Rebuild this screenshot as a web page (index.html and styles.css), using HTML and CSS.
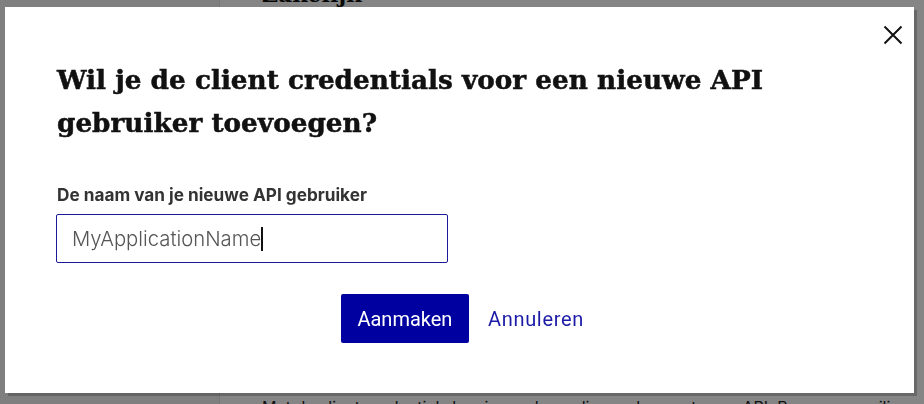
FILE: index.html
```html
<!DOCTYPE html>
<html lang="nl">
<head>
<meta charset="utf-8">
<title>API gebruiker toevoegen</title>
<link rel="stylesheet" href="styles.css">
</head>
<body>
<div class="page">
  <aside class="sidebar"></aside>
  <main class="main">
    <h2 class="bg-heading">Zakelijk</h2>
    <p class="bg-text">Met de client credentials kun je een koppeling maken met onze API. Bewaar ze veilig.</p>
  </main>
</div>
<div class="overlay">
  <div class="dialog" role="dialog" aria-labelledby="dlg-title">
    <button class="close" aria-label="Sluiten">
      <svg width="20" height="20" viewBox="0 0 20 20"><path d="M1.5 1.5 L18.5 18.5 M18.5 1.5 L1.5 18.5" stroke="#111" stroke-width="2" fill="none"/></svg>
    </button>
    <h1 id="dlg-title" class="title">Wil je de client credentials voor een nieuwe API gebruiker toevoegen?</h1>
    <label class="label" for="name">De naam van je nieuwe API gebruiker</label>
    <div class="field"><span class="value">MyApplicationName</span><span class="caret"></span></div>
    <div class="actions">
      <button class="primary">Aanmaken</button>
      <a class="link" href="#">Annuleren</a>
    </div>
  </div>
</div>
</body>
</html>
```
FILE: styles.css
```css
html, body {
  margin: 0;
  padding: 0;
  height: 100%;
  overflow: hidden;
}
body {
  font-family: "Liberation Sans", Arial, sans-serif;
  background: #ffffff;
}
.page {
  display: flex;
  height: 100%;
}
.sidebar {
  flex: 0 0 219px;
  background: #f4f4f4;
  border-right: 1px solid #e4e4e4;
}
.main {
  flex: 1;
  min-width: 0;
  overflow: hidden;
  padding-left: 42px;
  display: flex;
  flex-direction: column;
  justify-content: space-between;
}
.bg-heading {
  margin: -19px 0 0;
  font-family: "DejaVu Serif", serif;
  font-size: 22px;
  color: #111;
}
.bg-text {
  margin: 0 0 -13px;
  font-family: "Inter", sans-serif;
  font-size: 16px;
  line-height: 20px;
  color: #222;
  white-space: nowrap;
}
.overlay {
  position: fixed;
  inset: 0;
  background: rgba(0, 0, 0, 0.48);
  display: flex;
  padding: 7px 10px 11px 5px;
}
.dialog {
  position: relative;
  flex: 1;
  background: #fff;
  box-shadow: 3px 3px 0 rgba(0, 0, 0, 0.22);
  padding: 51px 52px 0 52px;
  display: flex;
  flex-direction: column;
  align-items: flex-start;
}
.close {
  position: absolute;
  top: 17px;
  right: 10px;
  width: 22px;
  height: 22px;
  padding: 0;
  border: 0;
  background: none;
  display: flex;
  align-items: center;
  justify-content: center;
}
.title {
  margin: 0;
  font-family: "DejaVu Serif", serif;
  font-weight: bold;
  font-size: 26.3px;
  line-height: 43px;
  color: #111;
  -webkit-text-stroke: 0.5px #111;
  max-width: 730px;
}
.label {
  margin-top: 41px;
  font-family: "Inter", sans-serif;
  font-weight: 700;
  font-size: 17.2px;
  line-height: 20px;
  color: #333;
}
.field {
  margin: 9px 0 0 -1px;
  box-sizing: border-box;
  width: 392px;
  height: 49px;
  border: 1px solid #1a1a9a;
  border-radius: 2px;
  padding: 0 15px;
  display: flex;
  align-items: center;
}
.value {
  font-family: "Inter", sans-serif;
  font-size: 20.3px;
  color: #555;
  font-weight: 300;
}
.caret {
  width: 2px;
  height: 24px;
  background: #111;
}
.actions {
  align-self: center;
  margin: 31px 0 0 6px;
  display: flex;
  align-items: center;
  gap: 19px;
}
.primary {
  width: 128px;
  height: 49px;
  border: 0;
  border-radius: 2px;
  background: #0000a0;
  color: #fff;
  font-family: "Roboto", sans-serif;
  font-size: 20px;
}
.link {
  color: #1b1ba8;
  text-decoration: none;
  font-family: "Roboto", sans-serif;
  font-size: 20px;
  letter-spacing: 0.7px;
}
```
